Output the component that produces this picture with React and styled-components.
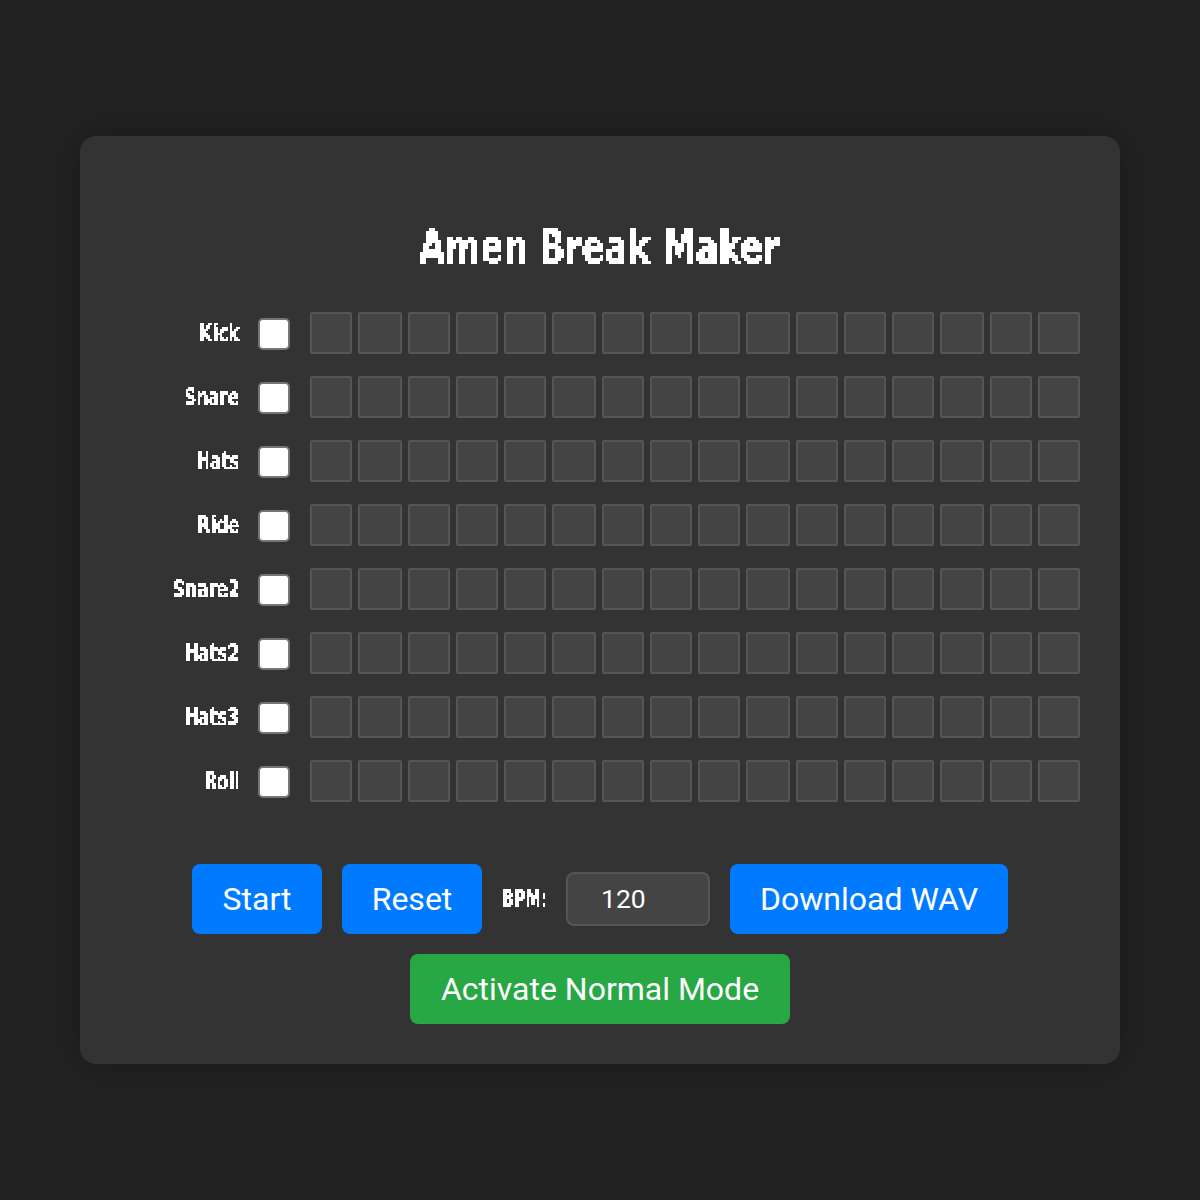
import React from "react";
import styled, { createGlobalStyle } from "styled-components";

const GlobalStyle = createGlobalStyle`
  html, body {
    margin: 0;
    padding: 0;
    background: #222;
    font-family: Roboto, "Liberation Sans", sans-serif;
  }
`;

const Page = styled.main`
  min-height: 100vh;
  display: flex;
  align-items: center;
  justify-content: center;
`;

const Panel = styled.section`
  width: 1040px;
  box-sizing: border-box;
  padding: 40px;
  background: #333;
  border-radius: 16px;
  box-shadow: 0 0 30px rgba(0, 0, 0, 0.3);
`;

const pixelFont = `"DejaVu Sans", sans-serif`;

const Title = styled.h1`
  margin: 46px 4px 42px 0;
  font-family: ${pixelFont};
  font-size: 47px;
  line-height: 48px;
  font-weight: 700;
  color: #fff;
  text-align: center;
  filter: url(#pixel-large);
`;

// no narrow pixel face is installed, so the wide bold one is squeezed
const Squeezed = styled.span`
  display: inline-block;
  white-space: nowrap;
  transform: scaleX(${(p) => p.$x});
  transform-origin: ${(p) => p.$origin || "center"};
`;

const Sequencer = styled.div`
  display: flex;
  flex-direction: column;
  gap: 22px;
  margin-bottom: 62px;
`;

const Row = styled.div`
  display: flex;
  align-items: center;
  gap: 20px;
`;

const TrackLabel = styled.label`
  width: 119px;
  margin: -1px 1px 0 0;
  font-family: ${pixelFont};
  font-size: 24px;
  font-weight: 700;
  color: #fff;
  text-align: right;
  filter: url(#pixel-small);
`;

const Mute = styled.input.attrs({ type: "checkbox" })`
  appearance: none;
  width: 32px;
  height: 32px;
  box-sizing: border-box;
  margin: 2px 0 0 -2px;
  flex: none;
  background: #fff;
  border: 2px solid #767676;
  border-radius: 5px;
`;

const Steps = styled.div`
  flex: 1;
  display: grid;
  grid-template-columns: 42px 44px 42px 42px 42px 44px 42px 42px 42px 44px 42px 42px 42px 44px 42px 42px;
  gap: 6px;
`;

const Step = styled.div`
  height: 42px;
  box-sizing: border-box;
  background: #444;
  border: 2px solid #555;
  border-radius: 2px;
`;

const Controls = styled.div`
  display: flex;
  flex-wrap: wrap;
  align-items: center;
  justify-content: center;
  gap: 20px;
`;

const Button = styled.button`
  width: ${(p) => p.$width}px;
  height: 70px;
  padding: 0;
  border: 0;
  border-radius: 8px;
  background: ${(p) => p.$bg || "#007bff"};
  color: #fff;
  font-family: Roboto, sans-serif;
  font-size: 32px;
`;

const BpmLabel = styled.label`
  width: 44px;
  margin-left: -1px;
  margin-right: 1px;
  font-family: ${pixelFont};
  font-size: 24px;
  font-weight: 700;
  color: #fff;
  filter: url(#pixel-small);
`;

const BpmInput = styled.input`
  width: 144px;
  height: 54px;
  box-sizing: border-box;
  padding: 0 0 2px 33px;
  background: #444;
  border: 2px solid #555;
  border-radius: 8px;
  color: #fff;
  font-family: Roboto, sans-serif;
  font-size: 26.5px;
  outline: none;
`;

const tracks = ["Kick", "Snare", "Hats", "Ride", "Snare2", "Hats2", "Hats3", "Roll"];
const steps = Array.from({ length: 16 }, (_, i) => i);

// blocky look for the headings, the text stays real text
const PixelFilter = ({ id, size }) => (
  <filter id={id} x="0" y="0" width="100%" height="100%" colorInterpolationFilters="sRGB">
    <feFlood x="0" y="0" width="1" height="1" />
    <feComposite width={size} height={size} />
    <feTile result="grid" />
    <feComposite in="SourceGraphic" in2="grid" operator="in" />
    <feComponentTransfer result="dots">
      <feFuncA type="discrete" tableValues="0 1 1 1" />
    </feComponentTransfer>
    {Array.from({ length: size * size }, (_, i) => (
      <feOffset key={i} in="dots" dx={i % size} dy={Math.floor(i / size)} result={`d${i}`} />
    ))}
    <feMerge>
      {Array.from({ length: size * size }, (_, i) => (
        <feMergeNode key={i} in={`d${i}`} />
      ))}
    </feMerge>
  </filter>
);

export default function App() {
  return (
    <>
      <GlobalStyle />
      <svg width="0" height="0" style={{ position: "absolute" }}>
        <defs>
          <PixelFilter id="pixel-large" size={3} />
          <PixelFilter id="pixel-small" size={2} />
        </defs>
      </svg>
      <Page>
        <Panel>
          <Title>
            <Squeezed $x={0.72}>Amen Break Maker</Squeezed>
          </Title>
          <Sequencer>
            {tracks.map((name) => (
              <Row key={name}>
                <TrackLabel>
                  <Squeezed $x={0.7} $origin="right">{name}</Squeezed>
                </TrackLabel>
                <Mute />
                <Steps>
                  {steps.map((i) => (
                    <Step key={i} />
                  ))}
                </Steps>
              </Row>
            ))}
          </Sequencer>
          <Controls>
            <Button $width={130}>Start</Button>
            <Button $width={140}>Reset</Button>
            <BpmLabel>
              <Squeezed $x={0.66} $origin="left">BPM:</Squeezed>
            </BpmLabel>
            <BpmInput type="text" defaultValue="120" />
            <Button $width={278}>Download WAV</Button>
            <Button $width={380} $bg="#28a745">Activate Normal Mode</Button>
          </Controls>
        </Panel>
      </Page>
    </>
  );
}
